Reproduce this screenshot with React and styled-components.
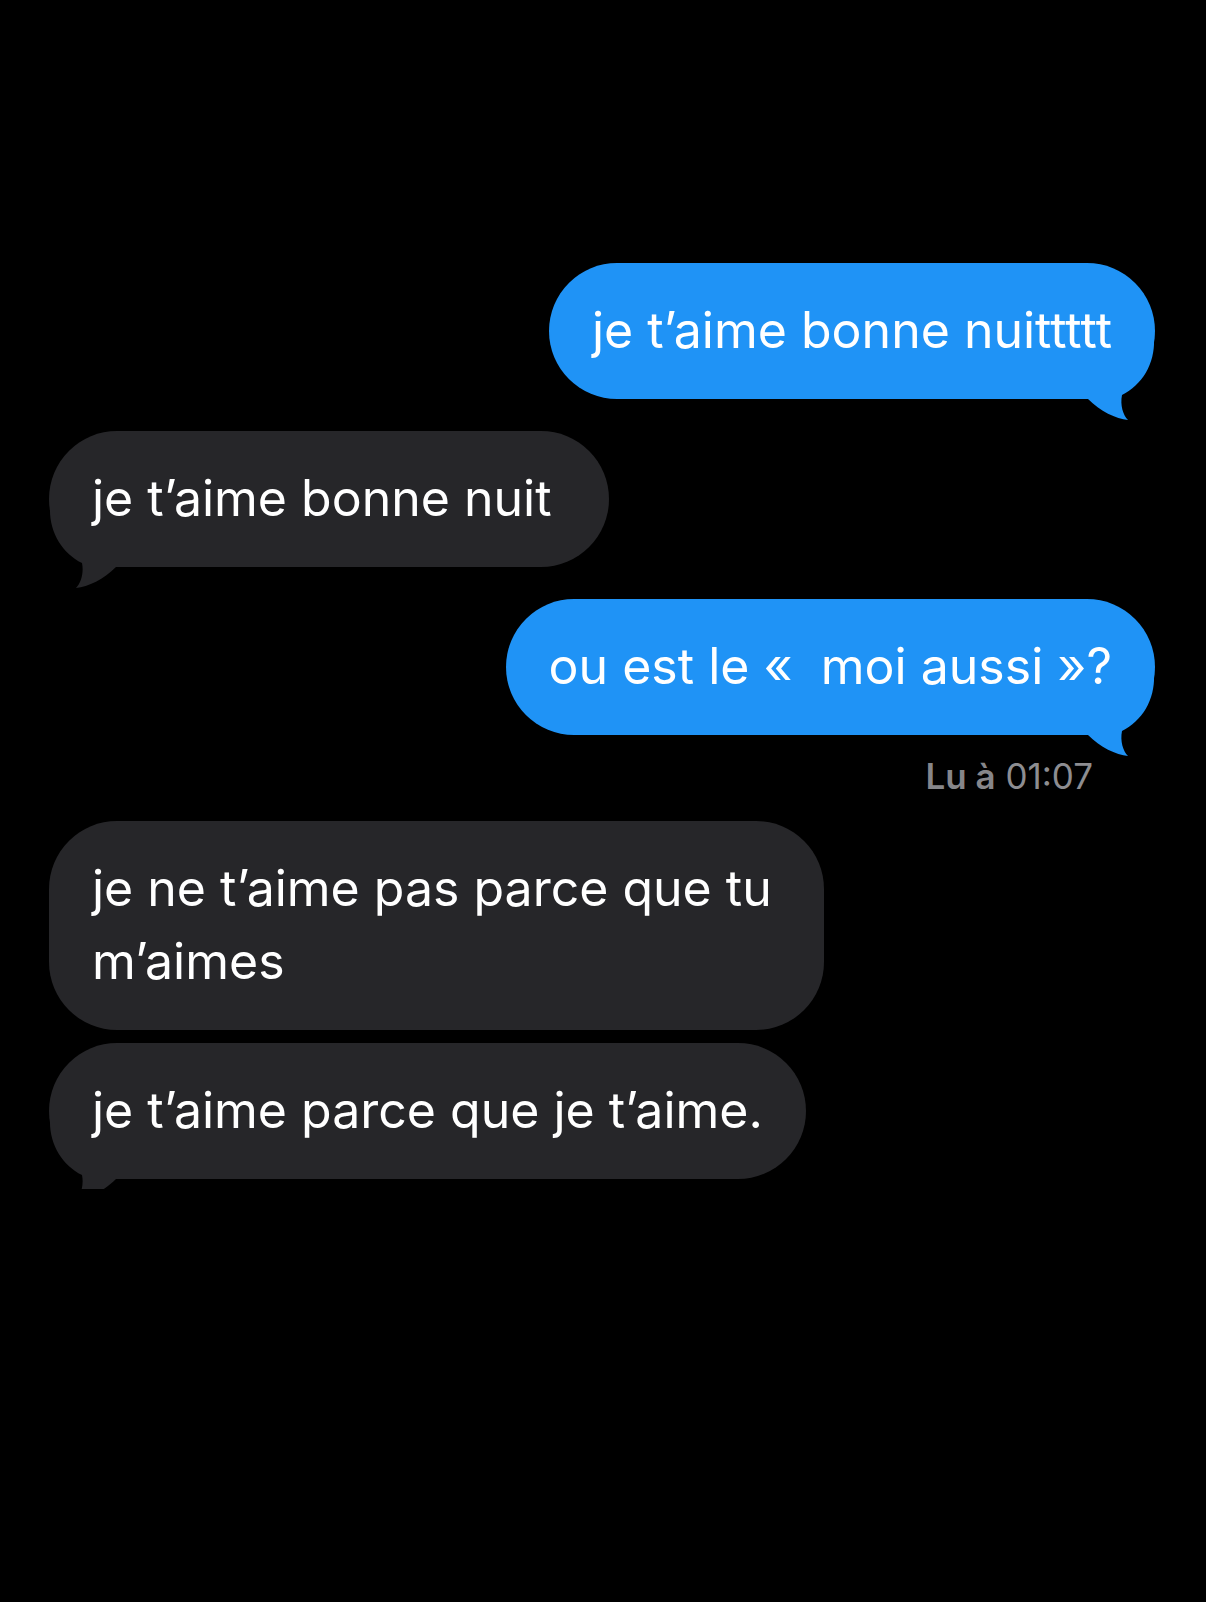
import React from "react";
import styled, { createGlobalStyle } from "styled-components";

const GlobalStyle = createGlobalStyle`
  html, body {
    margin: 0;
    padding: 0;
    background: #000;
  }
  body {
    font-family: "Inter", "Noto Sans", sans-serif;
    -webkit-font-smoothing: antialiased;
  }
`;

const BLUE = "#1f93f6";
const GREY = "#262629";

const Screen = styled.div`
  min-height: 1602px;
  background: #000;
  display: flex;
  flex-direction: column;
  padding: 263px 51px 0 49px;
  box-sizing: border-box;
`;

const Row = styled.div`
  display: flex;
  justify-content: ${(p) => (p.$side === "me" ? "flex-end" : "flex-start")};
  margin-top: ${(p) => p.$top || 0}px;
`;

const Bubble = styled.div`
  position: relative;
  isolation: isolate;
  max-width: 775px;
  box-sizing: border-box;
  padding: 31px 43px 32px 43px;
  border-radius: 68px;
  background: ${(p) => (p.$side === "me" ? BLUE : GREY)};
  color: #fff;
  font-size: 50px;
  line-height: 73px;
  white-space: pre-wrap;
`;

const TailSvg = styled.svg`
  position: absolute;
  z-index: -1;
  bottom: ${(p) => (p.$cut ? -10 : -21)}px;
  width: 80px;
  ${(p) =>
    p.$side === "me"
      ? "right: -5px;"
      : "left: -5px; transform: scaleX(-1);"}
`;

const Receipt = styled.div`
  align-self: flex-end;
  margin: 20px 62px 24px 0;
  font-size: 35px;
  line-height: 42px;
  color: #8d8d91;
  b {
    font-weight: 600;
    color: #86868a;
  }
`;

// bubble tail: the horn hanging off the bottom corner, drawn under the text
const Tail = ({ side, color, cut }) => {
  const h = cut ? 70 : 81;
  return (
    <TailSvg $side={side} $cut={cut} height={h} viewBox={`0 0 80 ${h}`}>
      <path
        d="M74 0 C75 25 62 46 42 56 C40 66 43 76 48 81 C36 80 20 72 8 60 L0 60 L0 0 Z"
        fill={color}
      />
    </TailSvg>
  );
};

const Message = ({ side, top, tail, cut, children }) => (
  <Row $side={side} $top={top}>
    <Bubble $side={side}>
      {children}
      {tail && <Tail side={side} cut={cut} color={side === "me" ? BLUE : GREY} />}
    </Bubble>
  </Row>
);

const App = () => {
  return (
    <>
      <GlobalStyle />
      <Screen>
        <Message side="me" tail>
          je t’aime bonne nuittttt
        </Message>
        <Message side="them" top={32} tail>
          {"je t’aime bonne nuit\u00a0"}
        </Message>
        <Message side="me" top={32} tail>
          ou est le «&nbsp; moi aussi »?
        </Message>
        <Receipt>
          <b>Lu à</b> 01:07
        </Receipt>
        <Message side="them">je ne t’aime pas parce que tu m’aimes</Message>
        <Message side="them" top={13} tail cut>
          je t’aime parce que je t’aime.
        </Message>
      </Screen>
    </>
  );
};

export default App;
